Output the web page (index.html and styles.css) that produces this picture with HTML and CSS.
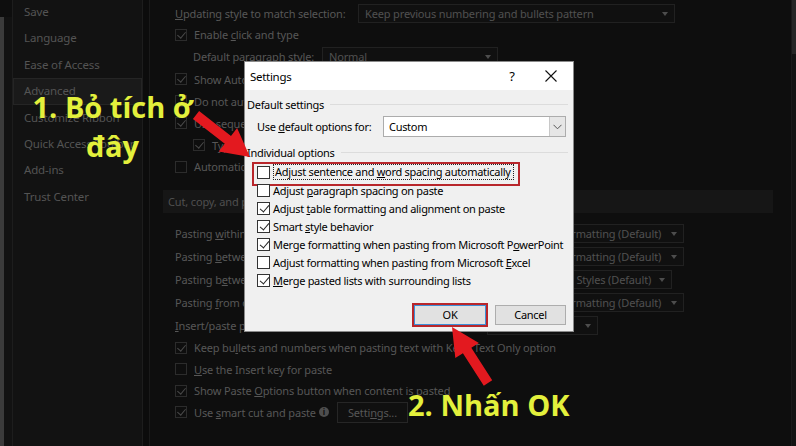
FILE: index.html
```html
<!DOCTYPE html>
<html>
<head>
<meta charset="utf-8">
<title>Settings</title>
<link rel="stylesheet" href="styles.css">
</head>
<body>
<div class="app">
  <div class="edge"></div>
  <nav class="sidebar">
    <div class="nav-item">Save</div>
    <div class="nav-item">Language</div>
    <div class="nav-item">Ease of Access</div>
    <div class="nav-item active">Advanced</div>
    <div class="nav-item">Customize Ribbon</div>
    <div class="nav-item">Quick Access Toolbar</div>
    <div class="nav-item">Add-ins</div>
    <div class="nav-item">Trust Center</div>
  </nav>
  <div class="sep"></div>
  <main class="main">
    <div class="row h22"><span class="label lw183"><u>U</u>pdating style to match selection:</span><span class="select sw317">Keep previous numbering and bullets pattern</span></div>
    <div class="row h21"><span class="bcb checked"></span><span>Enable <u>c</u>lick and type</span></div>
    <div class="row h23 indent"><span class="label lw129">Default paragraph style:</span><span class="select sw176">Normal</span></div>
    <div class="row h22"><span class="bcb checked"></span><span>Show AutoComplete suggestions</span></div>
    <div class="row h22"><span class="bcb"></span><span>Do not automatically hyperlink screenshot</span></div>
    <div class="row h22"><span class="bcb checked"></span><span>Use sequence checking</span></div>
    <div class="row h22 indent"><span class="bcb checked"></span><span>Type and replace</span></div>
    <div class="row h21"><span class="bcb"></span><span>Automatically switch keyboard to match language of surrounding text</span></div>

    <div class="section">Cut, copy, and paste</div>

    <div class="row h23"><span class="label lw312">Pasting <u>w</u>ithin the same document:</span><span class="select sw197">Keep Source Formatting (Default)</span></div>
    <div class="row h23"><span class="label lw312">Pasting <u>b</u>etween documents:</span><span class="select sw197">Keep Source Formatting (Default)</span></div>
    <div class="row h23"><span class="label lw312">Pasting b<u>e</u>tween documents when style definitions conflict:</span><span class="select sw185">Use Destination Styles (Default)</span></div>
    <div class="row h23"><span class="label lw312">Pasting <u>f</u>rom other programs:</span><span class="select sw197">Keep Source Formatting (Default)</span></div>
    <div class="row h23"><span class="label lw312"><u>I</u>nsert/paste pictures as:</span><span class="select sw111">In line with text</span></div>
    <div class="row h215"><span class="bcb checked"></span><span>Keep bu<u>l</u>lets and numbers when pasting text with Keep Text Only option</span></div>
    <div class="row h215"><span class="bcb"></span><span><u>U</u>se the Insert key for paste</span></div>
    <div class="row h215"><span class="bcb checked"></span><span>Show Paste <u>O</u>ptions button when content is pasted</span></div>
    <div class="row h215"><span class="bcb checked"></span><span>Use <u>s</u>mart cut and paste</span><span class="info">i</span><span class="dark-btn">Setti<u>n</u>gs...</span></div>
  </main>
  <div class="scrollbar"><div class="thumb"></div></div>
</div>

<div class="dialog">
  <div class="titlebar">
    <span class="title">Settings</span>
    <span class="help">?</span>
    <span class="close"><svg width="12" height="12" viewBox="0 0 12 12"><path d="M0.5 0.5 L11.5 11.5 M11.5 0.5 L0.5 11.5" stroke="#111" stroke-width="1.1" fill="none"/></svg></span>
  </div>
  <div class="dbody">
    <div class="group"><span>Default settings</span></div>
    <div class="combo-row">
      <span class="combo-label">Use <u>d</u>efault options for:</span>
      <div class="combo"><span class="combo-val">Custom</span><span class="combo-btn"><svg width="9" height="6" viewBox="0 0 9 6"><path d="M0.5 0.8 L4.5 4.8 L8.5 0.8" stroke="#555" stroke-width="1" fill="none"/></svg></span></div>
    </div>
    <div class="group"><span>Individual options</span></div>
    <div class="opts">
      <div class="opt marked"><span class="cb"></span><span class="focus">Adjust sentence and <u>w</u>ord spacing automatically</span></div>
      <div class="opt"><span class="cb"></span><span>Adjust <u>p</u>aragraph spacing on paste</span></div>
      <div class="opt"><span class="cb on"></span><span>Adjust <u>t</u>able formatting and alignment on paste</span></div>
      <div class="opt"><span class="cb on"></span><span>Smart <u>s</u>tyle behavior</span></div>
      <div class="opt"><span class="cb on"></span><span>Merge formatting when pasting from Microsoft P<u>o</u>werPoint</span></div>
      <div class="opt"><span class="cb"></span><span>Adjust formatting when pasting from Microsoft <u>E</u>xcel</span></div>
      <div class="opt"><span class="cb on"></span><span><u>M</u>erge pasted lists with surrounding lists</span></div>
    </div>
    <div class="buttons">
      <span class="btn ok">OK</span>
      <span class="btn">Cancel</span>
    </div>
  </div>
</div>

<div class="note note1">1. Bỏ tích ở<br>đây</div>
<div class="note note2">2. Nhấn OK</div>

<svg class="arrows" width="796" height="446" viewBox="0 0 796 446">
  <polygon fill="#e3191f" points="250,157 237.1,128 231,135.9 199.1,111.1 192.9,118.9 224.8,143.7 218.7,151.6"/>
  <polygon fill="#e3191f" points="452,327 478.9,343 471.3,347.8 492.2,380.3 483.8,385.7 462.9,353.2 455.3,358.1"/>
</svg>
</body>
</html>
```

FILE: styles.css
```css
* { box-sizing: border-box; }
html, body { margin: 0; padding: 0; }
body {
  width: 796px;
  height: 446px;
  overflow: hidden;
  background: #0e0e0e;
  font-family: "Noto Sans", "Open Sans", sans-serif;
  font-size: 11px;
  letter-spacing: -0.15px;
  color: #575757;
  position: relative;
}
u { text-decoration: underline; text-underline-offset: 1px; }

.app { display: flex; height: 446px; }

.edge {
  width: 12px;
  flex: none;
  background: #121212;
  border-left: 4px solid #3b3b3b;
  margin-top: 17px;
}

.sidebar {
  width: 131px;
  flex: none;
  background: #121212;
  border-left: 1px solid #1d1d1d;
  border-right: 1px solid #1d1d1d;
  margin-top: -1px;
}
.nav-item {
  height: 26.4px;
  line-height: 24px;
  padding-left: 10px;
  color: #545454;
  font-size: 11.5px;
  white-space: nowrap;
  border: 1px solid transparent;
}
.nav-item.active {
  background: #1a1a1a;
  border-color: #252525;
}

.sep {
  width: 7px;
  flex: none;
  background: #0c0c0c;
  border-right: 1px solid #1a1a1a;
}

.main {
  width: 637px;
  flex: none;
  padding: 2px 0 0 13px;
  overflow: hidden;
}

.row {
  display: flex;
  align-items: center;
  padding-left: 12px;
  white-space: nowrap;
}
.row.indent { padding-left: 30px; }
.h21 { height: 21px; }
.h215 { height: 21.5px; }
.h22 { height: 22px; }
.h23 { height: 23px; }

.label { flex: none; }
.lw183 { width: 183px; }
.lw129 { width: 129px; }
.lw312 { width: 312px; }

.select {
  flex: none;
  height: 19px;
  line-height: 17px;
  border: 1px solid #212121;
  background: #101010;
  padding-left: 6px;
  position: relative;
  color: #505050;
}
.select::after {
  content: "";
  position: absolute;
  right: 6px;
  top: 7px;
  border-left: 3.5px solid transparent;
  border-right: 3.5px solid transparent;
  border-top: 4px solid #4d4d4d;
}
.sw317 { width: 317px; }
.sw176 { width: 176px; }
.sw197 { width: 197px; }
.sw185 { width: 185px; }
.sw111 { width: 111px; }

.bcb {
  width: 12px;
  height: 12px;
  flex: none;
  border: 1px solid #2c2c2c;
  margin-right: 7px;
  position: relative;
}
.bcb.checked::after {
  content: "";
  position: absolute;
  left: 3px;
  top: 0px;
  width: 4px;
  height: 7px;
  border-right: 1px solid #4a4a4a;
  border-bottom: 1px solid #4a4a4a;
  transform: rotate(40deg);
}

.section {
  margin-top: 13px;
  height: 23px;
  line-height: 23px;
  background: #161616;
  padding-left: 5px;
  width: 610px;
  margin-bottom: 9px;
  color: #4f4f4f;
}

.info {
  display: inline-block;
  width: 10px;
  height: 10px;
  border-radius: 50%;
  background: #4e4e4e;
  color: #0e0e0e;
  font-size: 8px;
  line-height: 10px;
  text-align: center;
  font-weight: bold;
  margin-left: 3px;
}
.dark-btn {
  margin-left: 8px;
  height: 21px;
  width: 71px;
  line-height: 19px;
  text-align: center;
  border: 1px solid #262626;
  background: #101010;
}

.scrollbar {
  width: 9px;
  flex: none;
  margin-left: 4px;
  background: #131313;
  border-left: 1px solid #1a1a1a;
}
.thumb {
  height: 54px;
  background: #262626;
}

/* Dialog */
.dialog {
  position: absolute;
  left: 244px;
  top: 61px;
  width: 330px;
  height: 271px;
  background: #f0f0f0;
  border: 1px solid #8a8a8a;
  color: #000;
  font-size: 11px;
  letter-spacing: -0.3px;
}
.titlebar {
  height: 28px;
  background: #fff;
  display: flex;
  align-items: center;
  padding-left: 5px;
}
.title { flex: 1; font-size: 11.5px; }
.help { width: 20px; text-align: center; font-size: 13px; margin-right: 23px; }
.close { width: 12px; height: 12px; margin-right: 16px; display: flex; }

.dbody { padding: 5px 5px 0 2px; }
.group {
  display: flex;
  align-items: center;
  height: 18px;
  white-space: nowrap;
}
.group::after {
  content: "";
  flex: 1;
  height: 1px;
  background: #dcdcdc;
  margin-left: 6px;
  margin-top: 1px;
}
.combo-row {
  display: flex;
  align-items: center;
  margin: 3px 2px 6px 10px;
}
.combo-label { width: 126px; flex: none; }
.combo {
  width: 184px;
  height: 21px;
  background: #fff;
  border: 1px solid #acacac;
  display: flex;
  align-items: center;
}
.combo-val { flex: 1; padding-left: 5px; }
.combo-btn {
  width: 16px;
  height: 19px;
  background: #e6e6e6;
  border-left: 1px solid #c8c8c8;
  display: flex;
  align-items: center;
  justify-content: center;
}

.opts { margin-top: 2px; padding-left: 10px; }
.opt {
  height: 18px;
  display: flex;
  align-items: center;
  white-space: nowrap;
  position: relative;
}
.cb {
  width: 13px;
  height: 13px;
  flex: none;
  border: 1px solid #333;
  background: #fff;
  margin-right: 3px;
  position: relative;
}
.cb.on::after {
  content: "";
  position: absolute;
  left: 3.5px;
  top: 0.5px;
  width: 4px;
  height: 8px;
  border-right: 1.2px solid #222;
  border-bottom: 1.2px solid #222;
  transform: rotate(40deg);
}
.focus {
  border: 1px dotted #222;
  padding: 0 2px 0 1px;
  line-height: 14px;
}
.opt.marked::after {
  content: "";
  position: absolute;
  left: -5px;
  top: -1px;
  width: 264px;
  height: 20px;
  border: 2px solid #b8262b;
}

.buttons {
  display: flex;
  justify-content: flex-end;
  gap: 9px;
  margin-top: 16px;
  padding-right: 2px;
}
.btn {
  height: 20px;
  width: 71px;
  background: #e1e1e1;
  border: 1px solid #adadad;
  text-align: center;
  line-height: 18px;
}
.btn.ok {
  border-color: #3c8fd7;
  outline: 2px solid #b8262b;
  width: 72px;
}

/* Annotations */
.note {
  position: absolute;
  font-family: "Open Sans", "Noto Sans", sans-serif;
  font-weight: 700;
  font-size: 29px;
  letter-spacing: 0;
  color: #e3f03c;
  white-space: nowrap;
}
.note1 {
  left: 22px;
  top: 87px;
  width: 181px;
  text-align: center;
  line-height: 39px;
}
.note2 {
  left: 408px;
  top: 390px;
  line-height: 29px;
}
.arrows {
  position: absolute;
  left: 0;
  top: 0;
  pointer-events: none;
}
```
